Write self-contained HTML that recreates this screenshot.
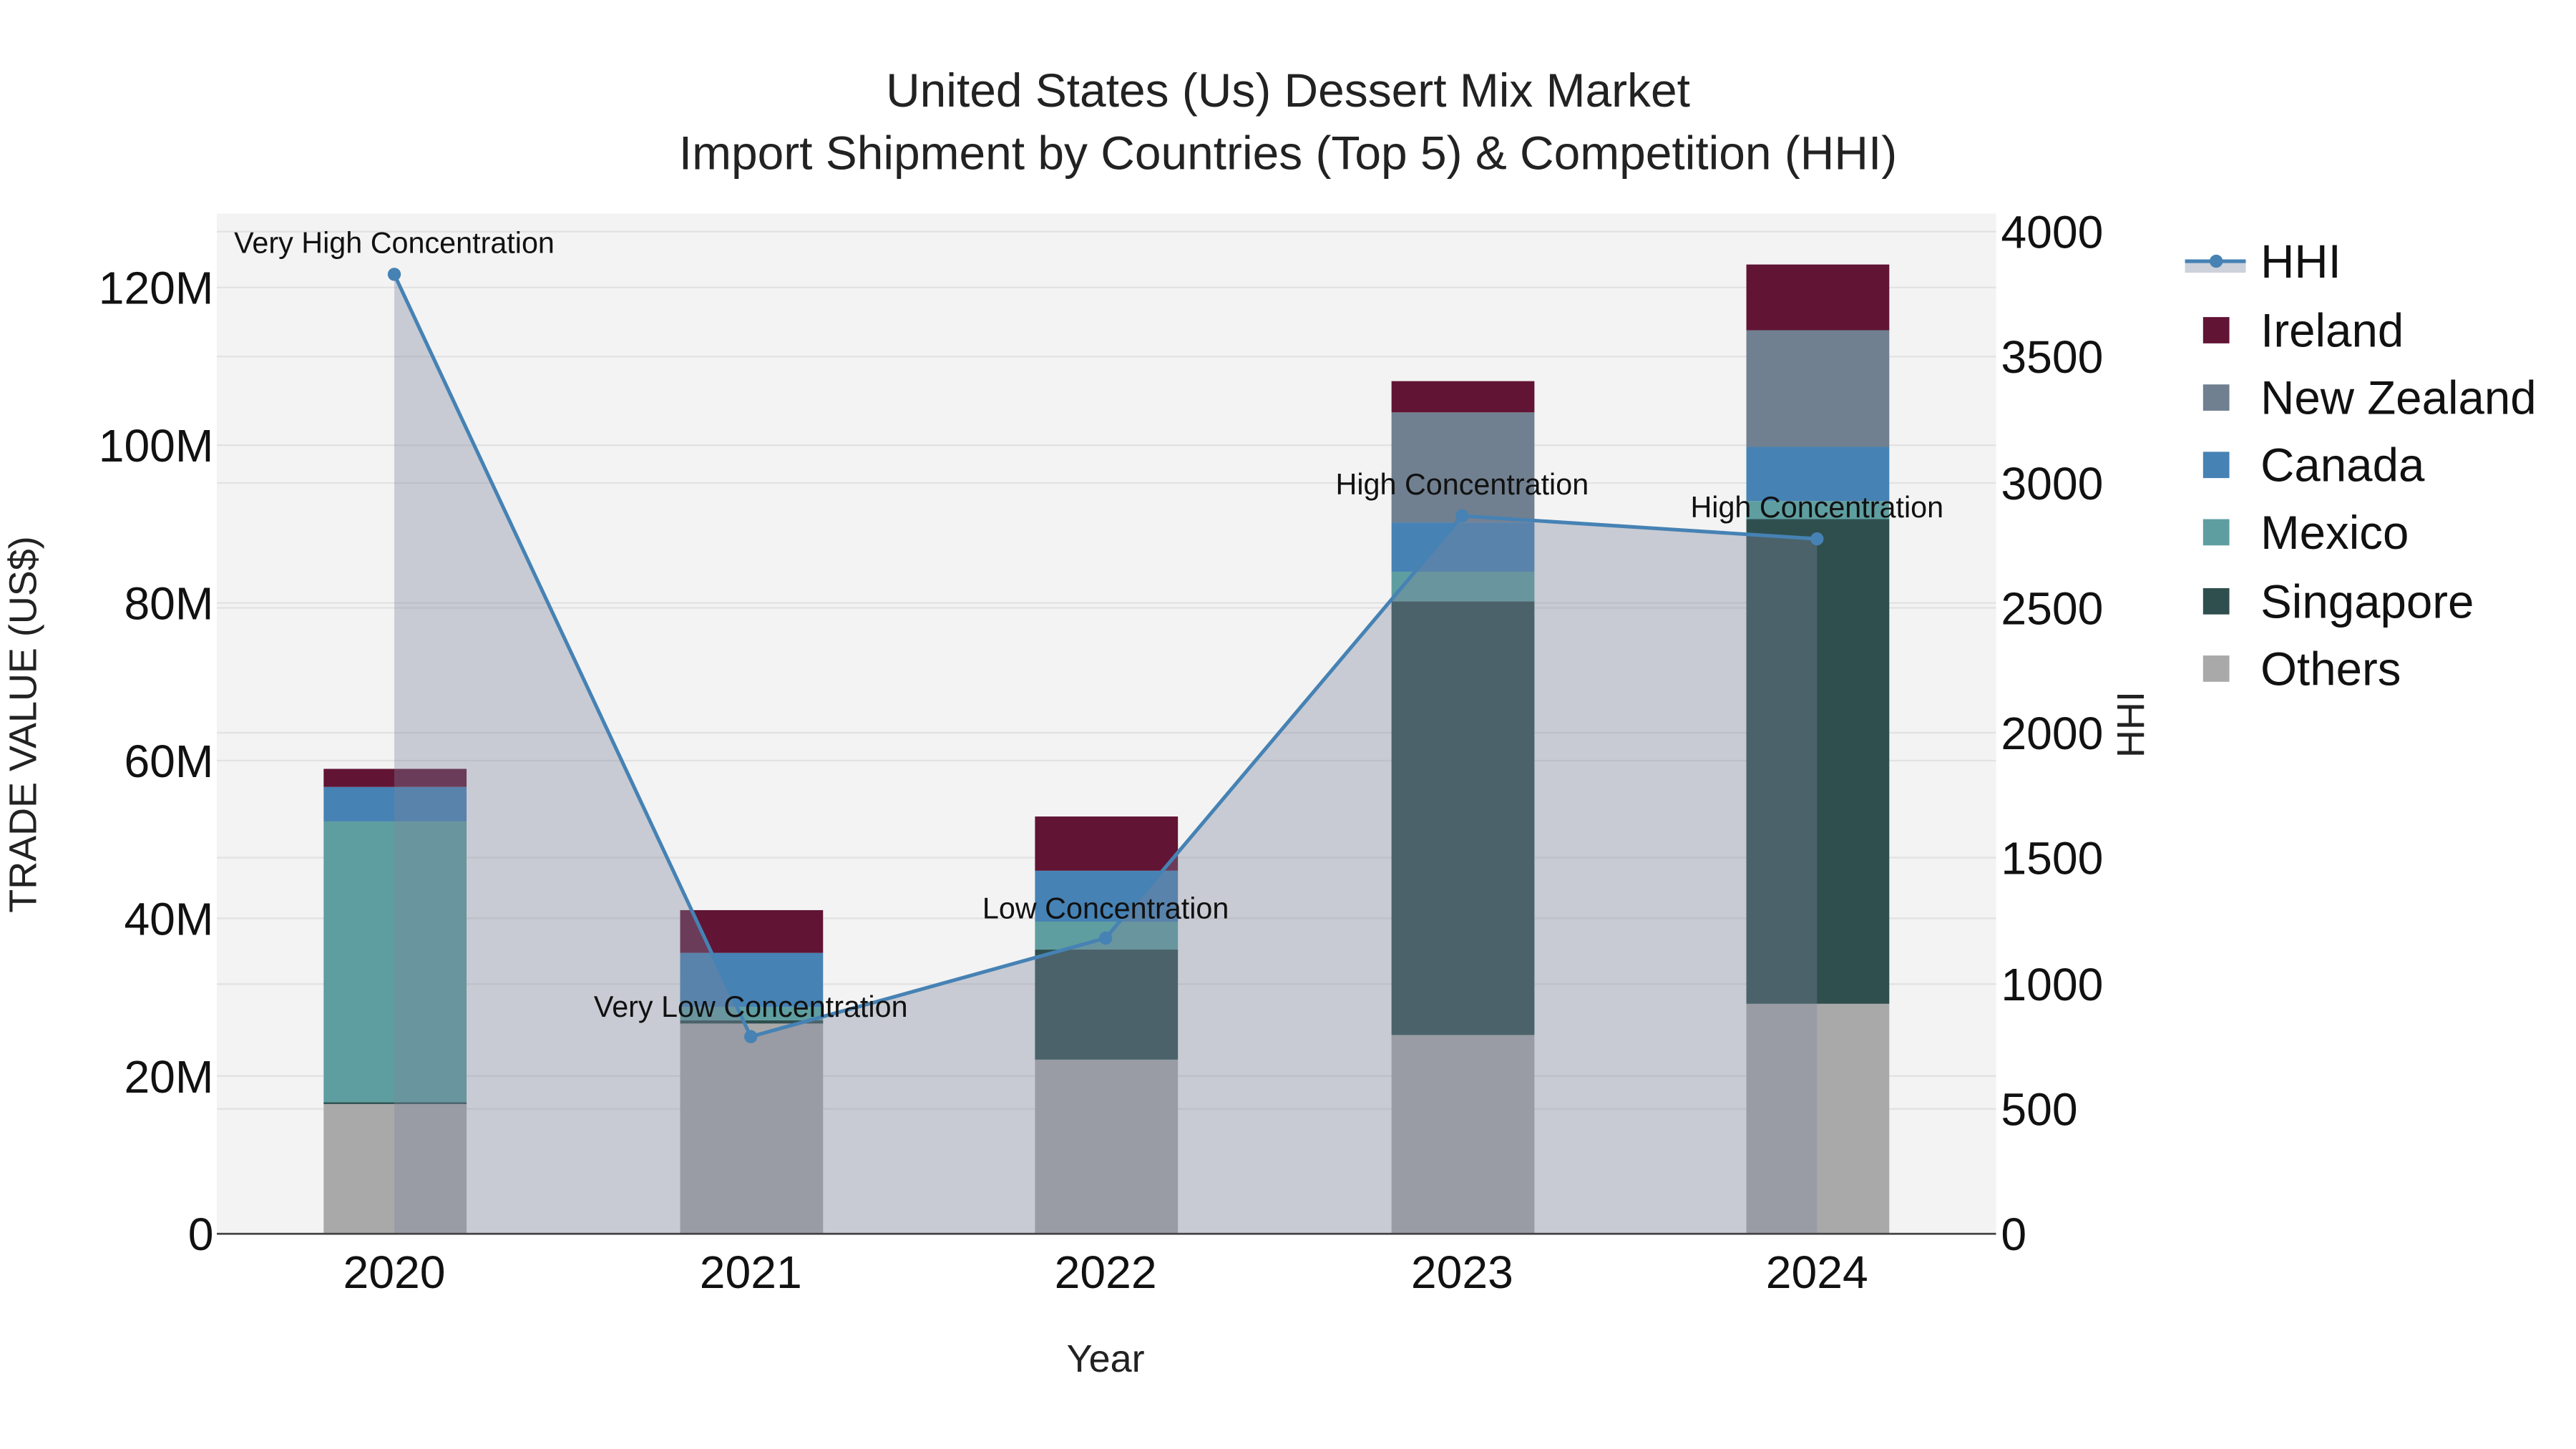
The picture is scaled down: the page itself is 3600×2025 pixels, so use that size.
<!DOCTYPE html>
<html><head><meta charset="utf-8"><style>
html,body{margin:0;padding:0;background:#fff;}
svg{display:block;font-family:"Liberation Sans",sans-serif;}
</style></head><body>
<svg width="3600" height="2025" viewBox="0 0 1568 882" xmlns="http://www.w3.org/2000/svg">
<rect x="0" y="0" width="1568" height="882" fill="#fff"/>
<rect x="132" y="130" width="1083" height="621" fill="#f3f3f3"/>
<g stroke="#e2e2e2" stroke-width="1">
<line x1="132" x2="1215" y1="655" y2="655"/><line x1="132" x2="1215" y1="559" y2="559"/>
<line x1="132" x2="1215" y1="463" y2="463"/><line x1="132" x2="1215" y1="367" y2="367"/>
<line x1="132" x2="1215" y1="271" y2="271"/><line x1="132" x2="1215" y1="175" y2="175"/>
<line x1="132" x2="1215" y1="675" y2="675"/><line x1="132" x2="1215" y1="599" y2="599"/>
<line x1="132" x2="1215" y1="522" y2="522"/><line x1="132" x2="1215" y1="446" y2="446"/>
<line x1="132" x2="1215" y1="370" y2="370"/><line x1="132" x2="1215" y1="294" y2="294"/>
<line x1="132" x2="1215" y1="217" y2="217"/><line x1="132" x2="1215" y1="141" y2="141"/>
</g>
<g>
<rect x="197" y="672" width="87" height="79" fill="#a9a9a9"/>
<rect x="197" y="500" width="87" height="172" fill="#5f9ea0"/>
<rect x="197" y="671" width="87" height="1" fill="#2f4f4f"/>
<rect x="197" y="479" width="87" height="21" fill="#4682b4"/>
<rect x="197" y="468" width="87" height="11" fill="#611434"/>

<rect x="414" y="622" width="87" height="129" fill="#a9a9a9"/>
<rect x="414" y="621" width="87" height="2" fill="#2f4f4f"/>
<rect x="414" y="613" width="87" height="8" fill="#5f9ea0"/>
<rect x="414" y="580" width="87" height="33" fill="#4682b4"/>
<rect x="414" y="554" width="87" height="26" fill="#611434"/>

<rect x="630" y="645" width="87" height="106" fill="#a9a9a9"/>
<rect x="630" y="578" width="87" height="67" fill="#2f4f4f"/>
<rect x="630" y="561" width="87" height="17" fill="#5f9ea0"/>
<rect x="630" y="530" width="87" height="31" fill="#4682b4"/>
<rect x="630" y="497" width="87" height="33" fill="#611434"/>

<rect x="847" y="630" width="87" height="121" fill="#a9a9a9"/>
<rect x="847" y="366" width="87" height="264" fill="#2f4f4f"/>
<rect x="847" y="348" width="87" height="18" fill="#5f9ea0"/>
<rect x="847" y="318" width="87" height="30" fill="#4682b4"/>
<rect x="847" y="251" width="87" height="67" fill="#708090"/>
<rect x="847" y="232" width="87" height="19" fill="#611434"/>

<rect x="1063" y="611" width="87" height="140" fill="#a9a9a9"/>
<rect x="1063" y="316" width="87" height="295" fill="#2f4f4f"/>
<rect x="1063" y="305" width="87" height="11" fill="#5f9ea0"/>
<rect x="1063" y="272" width="87" height="33" fill="#4682b4"/>
<rect x="1063" y="201" width="87" height="71" fill="#708090"/>
<rect x="1063" y="161" width="87" height="40" fill="#611434"/>
</g>
<polygon points="240,751 240,167 457,631 673,571 890,314 1106,328 1106,751" fill="rgba(125,133,155,0.36)"/>
<line x1="132" x2="1215" y1="751" y2="751" stroke="#444" stroke-width="1.2"/>
<polyline points="240,167 457,631 673,571 890,314 1106,328" fill="none" stroke="#4682b4" stroke-width="2.2"/>
<g fill="#4682b4">
<circle cx="240" cy="167" r="4"/><circle cx="457" cy="631" r="4"/><circle cx="673" cy="571" r="4"/><circle cx="890" cy="314" r="4"/><circle cx="1106" cy="328" r="4"/>
</g>
<g font-size="18" fill="#111" text-anchor="middle">
<text x="240" y="154">Very High Concentration</text>
<text x="457" y="619">Very Low Concentration</text>
<text x="673" y="559">Low Concentration</text>
<text x="890" y="301">High Concentration</text>
<text x="1106" y="315">High Concentration</text>
</g>
<g font-size="28.7" fill="#222" text-anchor="middle">
<text x="784" y="65">United States (Us) Dessert Mix Market</text>
<text x="784" y="103">Import Shipment by Countries (Top 5) &amp; Competition (HHI)</text>
</g>
<g font-size="28" fill="#111" text-anchor="end">
<text x="130" y="761">0</text><text x="130" y="665">20M</text><text x="130" y="569">40M</text>
<text x="130" y="473">60M</text><text x="130" y="377">80M</text><text x="130" y="281">100M</text><text x="130" y="185">120M</text>
</g>
<g font-size="28" fill="#111" text-anchor="start">
<text x="1218" y="761">0</text><text x="1218" y="685">500</text><text x="1218" y="609">1000</text>
<text x="1218" y="532">1500</text><text x="1218" y="456">2000</text><text x="1218" y="380">2500</text>
<text x="1218" y="304">3000</text><text x="1218" y="227">3500</text><text x="1218" y="151">4000</text>
</g>
<g font-size="28" fill="#111" text-anchor="middle">
<text x="240" y="784">2020</text><text x="457" y="784">2021</text><text x="673" y="784">2022</text><text x="890" y="784">2023</text><text x="1106" y="784">2024</text>
</g>
<text x="673" y="835" font-size="23.5" fill="#222" text-anchor="middle">Year</text>
<text transform="translate(22,441) rotate(-90)" font-size="23.5" fill="#222" text-anchor="middle">TRADE VALUE (US$)</text>
<text transform="translate(1305,441) rotate(-90)" font-size="23.5" fill="#222" text-anchor="middle">HHI</text>
<rect x="1330" y="159" width="37" height="7" fill="#ccd1da"/>
<line x1="1330" x2="1367" y1="159" y2="159" stroke="#4682b4" stroke-width="2.2"/>
<circle cx="1349" cy="159" r="4" fill="#4682b4"/>
<g font-size="28.5" fill="#111">
<text x="1376" y="169">HHI</text>
<text x="1376" y="211">Ireland</text>
<text x="1376" y="252">New Zealand</text>
<text x="1376" y="293">Canada</text>
<text x="1376" y="334">Mexico</text>
<text x="1376" y="376">Singapore</text>
<text x="1376" y="417">Others</text>
</g>
<rect x="1341" y="193" width="16" height="16" fill="#611434"/>
<rect x="1341" y="234" width="16" height="16" fill="#708090"/>
<rect x="1341" y="275" width="16" height="16" fill="#4682b4"/>
<rect x="1341" y="316" width="16" height="16" fill="#5f9ea0"/>
<rect x="1341" y="358" width="16" height="16" fill="#2f4f4f"/>
<rect x="1341" y="399" width="16" height="16" fill="#a9a9a9"/>
</svg>
</body></html>
